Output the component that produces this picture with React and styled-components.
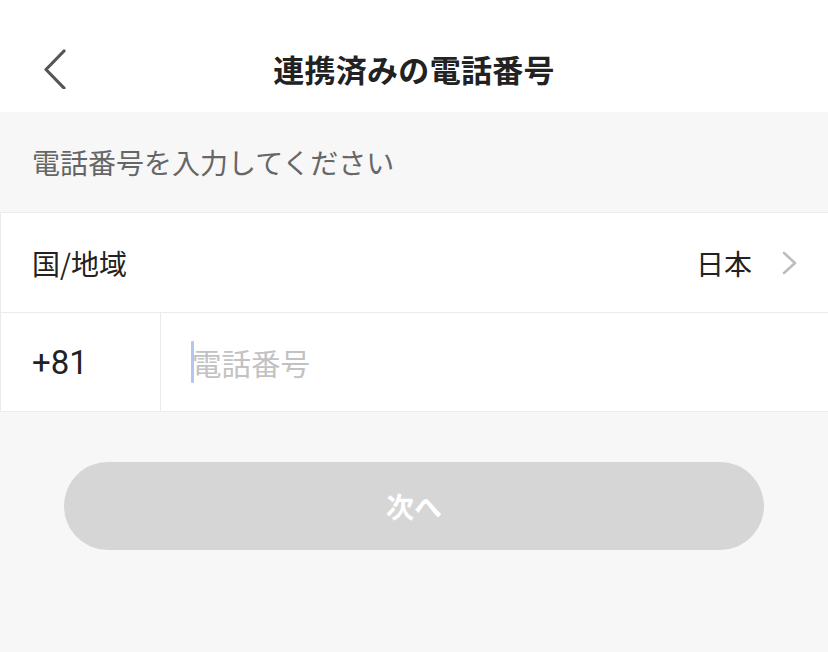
import React from "react";
import styled, { createGlobalStyle } from "styled-components";

const Global = createGlobalStyle`
  html, body { margin: 0; padding: 0; background: #f7f7f7; }
  body { font-family: "Noto Sans CJK JP", "Noto Sans", sans-serif; }
  * { box-sizing: border-box; }
`;

const Page = styled.div`
  width: 828px;
  height: 652px;
  background: #f7f7f7;
  display: flex;
  flex-direction: column;
`;

const Header = styled.header`
  height: 112px;
  padding-top: 24px;
  background: #fff;
  display: grid;
  grid-template-columns: 112px 1fr 112px;
  align-items: center;
`;

const BackButton = styled.button`
  border: 0;
  background: none;
  padding: 0 0 0 40px;
  display: flex;
  align-items: center;
  justify-content: flex-start;
  cursor: pointer;
  & svg { display: block; margin-top: 1px; }
`;

const Title = styled.h1`
  margin: 0;
  text-align: center;
  font-size: 31px;
  font-weight: 700;
  color: #222;
  letter-spacing: 0.3px;
`;

const Hint = styled.p`
  margin: 0;
  height: 100px;
  padding: 0 32px;
  display: flex;
  align-items: center;
  font-size: 28px;
  color: #666;
`;

const Group = styled.section`
  background: #fff;
  border: 1px solid #ebebeb;
  border-right: 0;
`;

const Row = styled.div`
  height: 99px;
  display: flex;
  align-items: center;
  border-top: ${(p) => (p.$first ? "0" : "1px solid #ebebeb")};
  padding: ${(p) => p.$pad || "0"};
`;

const Label = styled.span`
  font-size: 28px;
  color: #222;
  flex: 1;
`;

const Value = styled.span`
  font-size: 28px;
  color: #222;
  margin-right: 30px;
`;

const Code = styled.div`
  width: 160px;
  height: 100%;
  border-right: 1px solid #ebebeb;
  display: flex;
  align-items: center;
  padding-left: 31px;
  font-family: "Roboto", "Noto Sans", sans-serif;
  font-size: 33px;
  color: #222;
`;

const InputWrap = styled.div`
  flex: 1;
  height: 100%;
  display: flex;
  align-items: center;
  padding-left: 30px;
`;

const Caret = styled.span`
  display: inline-block;
  width: 3px;
  height: 42px;
  background: #b3c6f2;
  border-radius: 1px;
  margin-right: -2px;
`;

const PhoneInput = styled.input`
  flex: 1;
  border: 0;
  outline: none;
  background: transparent;
  font-family: "Noto Sans CJK JP", sans-serif;
  font-size: 29.5px;
  color: #222;
  padding: 0;
  &::placeholder { color: #c2c2c2; }
`;

const NextButton = styled.button`
  margin: 50px 64px 0;
  height: 88px;
  border: 0;
  border-radius: 44px;
  background: #d6d6d6;
  color: #fff;
  font-family: "Noto Sans CJK JP", sans-serif;
  font-size: 28px;
  font-weight: 700;
  cursor: default;
`;

export default function App() {
  return (
    <Page>
      <Global />
      <Header>
        <BackButton aria-label="戻る">
          <svg width="30" height="40" viewBox="0 0 30 40">
            <path d="M24 2 L6 20.5 L24 39" fill="none" stroke="#555" strokeWidth="3.2" strokeLinecap="round" strokeLinejoin="round" />
          </svg>
        </BackButton>
        <Title>連携済みの電話番号</Title>
        <div />
      </Header>
      <Hint>電話番号を入力してください</Hint>
      <Group>
        <Row $first $pad="0 30px 0 31px">
          <Label>国/地域</Label>
          <Value>日本</Value>
          <svg width="16" height="24" viewBox="0 0 16 24">
            <path d="M2 2 L13 12 L2 22" fill="none" stroke="#bdbdbd" strokeWidth="2.6" strokeLinecap="round" strokeLinejoin="round" />
          </svg>
        </Row>
        <Row>
          <Code>+81</Code>
          <InputWrap>
            <Caret />
            <PhoneInput placeholder="電話番号" />
          </InputWrap>
        </Row>
      </Group>
      <NextButton>次へ</NextButton>
    </Page>
  );
}
